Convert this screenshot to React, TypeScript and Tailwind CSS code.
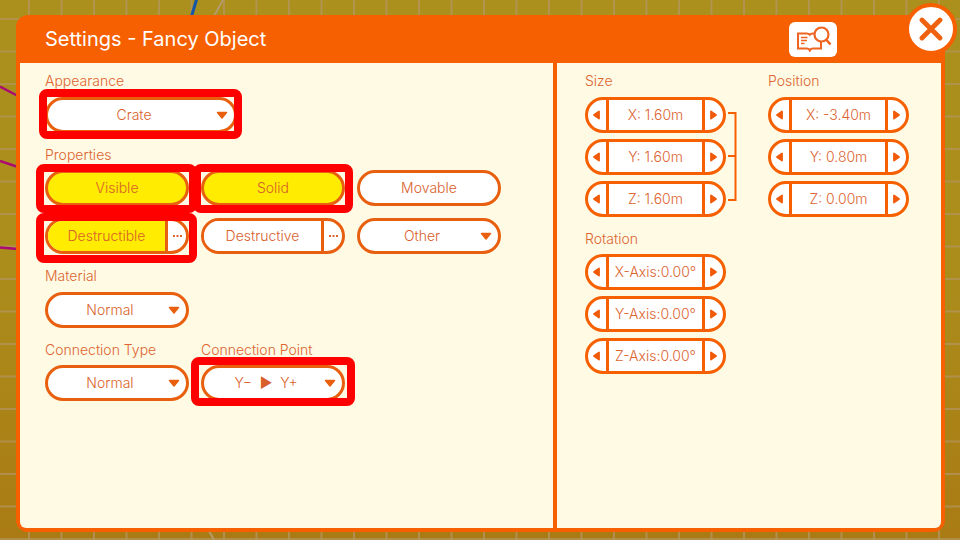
import React from "react";

const FONT = "font-['Inter','Liberation_Sans',sans-serif]";
const PILL = "h-9 rounded-full border-3 border-[#e8600f]";

function Backdrop() {
  return (
    <svg className="absolute inset-0 h-full w-full" aria-hidden="true">
      <defs>
        <linearGradient id="ground" x1="0" y1="0" x2="0" y2="1">
          <stop offset="0" stopColor="#ab901d" />
          <stop offset="0.5" stopColor="#ab8d1b" />
          <stop offset="1" stopColor="#aa7b14" />
        </linearGradient>
        <pattern id="grid" x="28" y="18" width="32.5" height="32.5" patternUnits="userSpaceOnUse">
          <path d="M1 0V32.5M0 1H32.5" stroke="#b4945c" strokeWidth="1.6" fill="none" />
        </pattern>
      </defs>
      <rect width="100%" height="100%" fill="url(#ground)" />
      <rect width="100%" height="100%" fill="url(#grid)" />
      <path d="M197 -2L191 18" stroke="#1456a8" strokeWidth="3" />
      <path d="M224 -2L213 18M209 531L214 540" stroke="#b39c68" strokeWidth="2" />
      <path d="M0 86.500L18 96M0 161L18 167M0 247.500L18 249" stroke="#ab0a72" strokeWidth="2.500" />
    </svg>
  );
}

function Mark({ place }: { place: string }) {
  return <span className={"pointer-events-none absolute z-10 rounded-lg border-8 border-[#ff0000] " + place} />;
}

function Section({ title, htmlFor, tight, children }: { title: string; htmlFor?: string; tight?: boolean; children: React.ReactNode }) {
  const cls = "block text-sm/5 font-light text-[#dc6430]";
  return (
    <section className={"flex flex-col " + (tight ? "gap-[5px]" : "gap-1.5")}>
      {htmlFor ? <label htmlFor={htmlFor} className={cls}>{title}</label> : <h2 className={cls}>{title}</h2>}
      {children}
    </section>
  );
}

function Drop({ id, label, value, width = "w-36", mark }: { id: string; label?: string; value: string; width?: string; mark?: string }) {
  return (
    <div className={"relative " + width}>
      <select
        id={id}
        aria-label={label}
        className={"w-full appearance-none bg-white pr-[22px] pl-2 text-center text-sm font-light text-[#d95f2a] " + PILL}
      >
        <option>{value}</option>
      </select>
      <svg className="pointer-events-none absolute top-3.5 right-[9px]" width="12" height="9" viewBox="0 0 12 9" aria-hidden="true">
        <path d="M1.500 1.500H10.500L6 7Z" fill="#e8600f" stroke="#e8600f" strokeWidth="1.500" strokeLinejoin="round" />
      </svg>
      {mark && <Mark place={mark} />}
    </div>
  );
}

function Toggle({ label, on, mark }: { label: string; on?: boolean; mark?: string }) {
  return (
    <div className="relative w-36">
      <button
        type="button"
        aria-pressed={!!on}
        className={"w-full text-sm font-light text-[#d9602a] " + PILL + (on ? " bg-[#ffec00]" : " bg-white")}
      >
        {label}
      </button>
      {mark && <Mark place={mark} />}
    </div>
  );
}

function SplitToggle({ label, on, mark }: { label: string; on?: boolean; mark?: string }) {
  return (
    <div className="relative w-36">
      <div className={"flex overflow-hidden bg-white " + PILL}>
        <button
          type="button"
          aria-pressed={!!on}
          className={"flex-1 text-sm font-light text-[#d9602a] " + (on ? "bg-[#ffec00]" : "bg-white")}
        >
          {label}
        </button>
        <button
          type="button"
          aria-label={label + " options"}
          className="flex w-[21px] items-center justify-center border-l-3 border-[#e8600f]"
        >
          <svg width="9" height="2" viewBox="0 0 9 2" aria-hidden="true">
            <path d="M0 0h2v2H0zM3.500 0h2v2h-2zM7 0h2v2H7z" fill="#dc6430" />
          </svg>
        </button>
      </div>
      {mark && <Mark place={mark} />}
    </div>
  );
}

function Stepper({ name, value }: { name: string; value: string }) {
  return (
    <div className="flex h-9 w-[141px] overflow-hidden rounded-full border-3 border-[#f66000] bg-white">
      <button type="button" aria-label={"Decrease " + name} className="flex w-[21px] items-center justify-center border-r-3 border-[#f66000]">
        <svg width="8" height="10" viewBox="0 0 8 10" aria-hidden="true">
          <path d="M6 1.500V8.500L1 5Z" fill="#f05a08" stroke="#f05a08" strokeWidth="1.800" strokeLinejoin="round" />
        </svg>
      </button>
      <input
        aria-label={name}
        defaultValue={value}
        className="w-0 min-w-0 flex-1 bg-white text-center text-sm font-light text-[#dc6430] outline-none"
      />
      <button type="button" aria-label={"Increase " + name} className="flex w-[21px] items-center justify-center border-l-3 border-[#f66000]">
        <svg width="8" height="10" viewBox="0 0 8 10" aria-hidden="true">
          <path d="M1 1.500V8.500L6 5Z" fill="#f05a08" stroke="#f05a08" strokeWidth="1.800" strokeLinejoin="round" />
        </svg>
      </button>
    </div>
  );
}

function Steppers({ title, items, linked, tight }: { title: string; items: string[][]; linked?: boolean; tight?: boolean }) {
  return (
    <Section title={title} tight={tight}>
      <div className="relative flex flex-col gap-1.5">
        {items.map(([axis, value]) => (
          <Stepper key={axis} name={title + " " + axis} value={value} />
        ))}
        {linked && (
          <svg className="absolute top-3.5 left-full" width="12" height="92" viewBox="0 0 12 92" aria-hidden="true">
            <path d="M2 2H9.500V89H2M2 45H9.500" fill="none" stroke="#f66000" strokeWidth="2" />
          </svg>
        )}
      </div>
    </Section>
  );
}

export default function App() {
  return (
    <div className={"relative flex h-screen flex-col overflow-hidden pt-[15px] pr-[15px] pb-2 pl-4 " + FONT}>
      <Backdrop />
      <main className="relative flex flex-1 flex-col rounded-xl bg-[#f66000] px-1 pb-1">
        <header className="flex h-12 items-center justify-between pr-26 pl-[25px]">
          <h1 className="text-xl text-white">Settings - Fancy Object</h1>
          <button type="button" aria-label="Guide" className="flex h-[35px] w-12 items-center justify-center rounded-md bg-white">
            <svg width="38" height="26" viewBox="0 0 38 26" fill="none" stroke="#ee6420" strokeWidth="2" aria-hidden="true">
              <path d="M21 7.500H18.500C17 7.500 16.500 8 15.800 8.800C15 8 14.500 7.500 13 7.500H4V22.500H12.500C14.500 22.500 15.300 23 15.800 24.500C16.300 23 17 22.500 19 22.500H27V16" />
              <path d="M7 11.500H13.500M7 14.500H13M7 17.500H10.500" strokeWidth="1.600" />
              <circle cx="27.500" cy="8.500" r="7" strokeWidth="2.200" />
              <path d="M32.500 14L36.500 18.500" strokeWidth="2.600" />
            </svg>
          </button>
        </header>
        <button
          type="button"
          aria-label="Close"
          className="absolute -top-3 -right-3 flex size-13 items-center justify-center rounded-full border-4 border-[#f66000] bg-white"
        >
          <svg width="24" height="24" viewBox="0 0 24 24" aria-hidden="true">
            <path d="M3 3L21 21M21 3L3 21" stroke="#f0610f" strokeWidth="4.800" strokeLinecap="round" />
          </svg>
        </button>
        <div className="grid flex-1 grid-cols-[533fr_388fr] overflow-hidden rounded-b-md bg-[#fffae3]">
          <div className="flex flex-col gap-3 pt-2 pl-[25px]">
            <Section title="Appearance" htmlFor="appearance">
              <Drop id="appearance" value="Crate" width="w-48" mark="-top-2 -bottom-1.5 -left-1.5 -right-[5px]" />
            </Section>
            <Section title="Properties" tight>
              <div className="grid grid-cols-[repeat(3,144px)] gap-3">
                <Toggle label="Visible" on mark="-top-1.5 -bottom-[7px] -left-[9px] -right-2" />
                <Toggle label="Solid" on mark="-top-1.5 -bottom-[7px] -left-2 -right-2" />
                <Toggle label="Movable" />
                <SplitToggle label="Destructible" on mark="-top-[5px] -bottom-[9px] -left-[9px] -right-2" />
                <SplitToggle label="Destructive" />
                <Drop id="other" label="Other" value="Other" />
              </div>
            </Section>
            <Section title="Material" htmlFor="material">
              <Drop id="material" value="Normal" />
            </Section>
            <div className="flex gap-3">
              <Section title="Connection Type" htmlFor="connection-type" tight>
                <Drop id="connection-type" value="Normal" />
              </Section>
              <Section title="Connection Point" htmlFor="connection-point" tight>
                <Drop id="connection-point" value={"Y−\u00a0 ▶ \u00a0Y+"} mark="-top-2 -bottom-[5px] -left-2.5 -right-2.5" />
              </Section>
            </div>
          </div>
          <div className="flex items-start gap-[42px] border-l-4 border-[#f66000] pt-2 pl-7">
            <div className="flex flex-col gap-3">
              <Steppers title="Size" linked items={[["X", "X: 1.60m"], ["Y", "Y: 1.60m"], ["Z", "Z: 1.60m"]]} />
              <Steppers title="Rotation" tight items={[["X", "X-Axis:0.00°"], ["Y", "Y-Axis:0.00°"], ["Z", "Z-Axis:0.00°"]]} />
            </div>
            <Steppers title="Position" items={[["X", "X: -3.40m"], ["Y", "Y: 0.80m"], ["Z", "Z: 0.00m"]]} />
          </div>
        </div>
      </main>
    </div>
  );
}
